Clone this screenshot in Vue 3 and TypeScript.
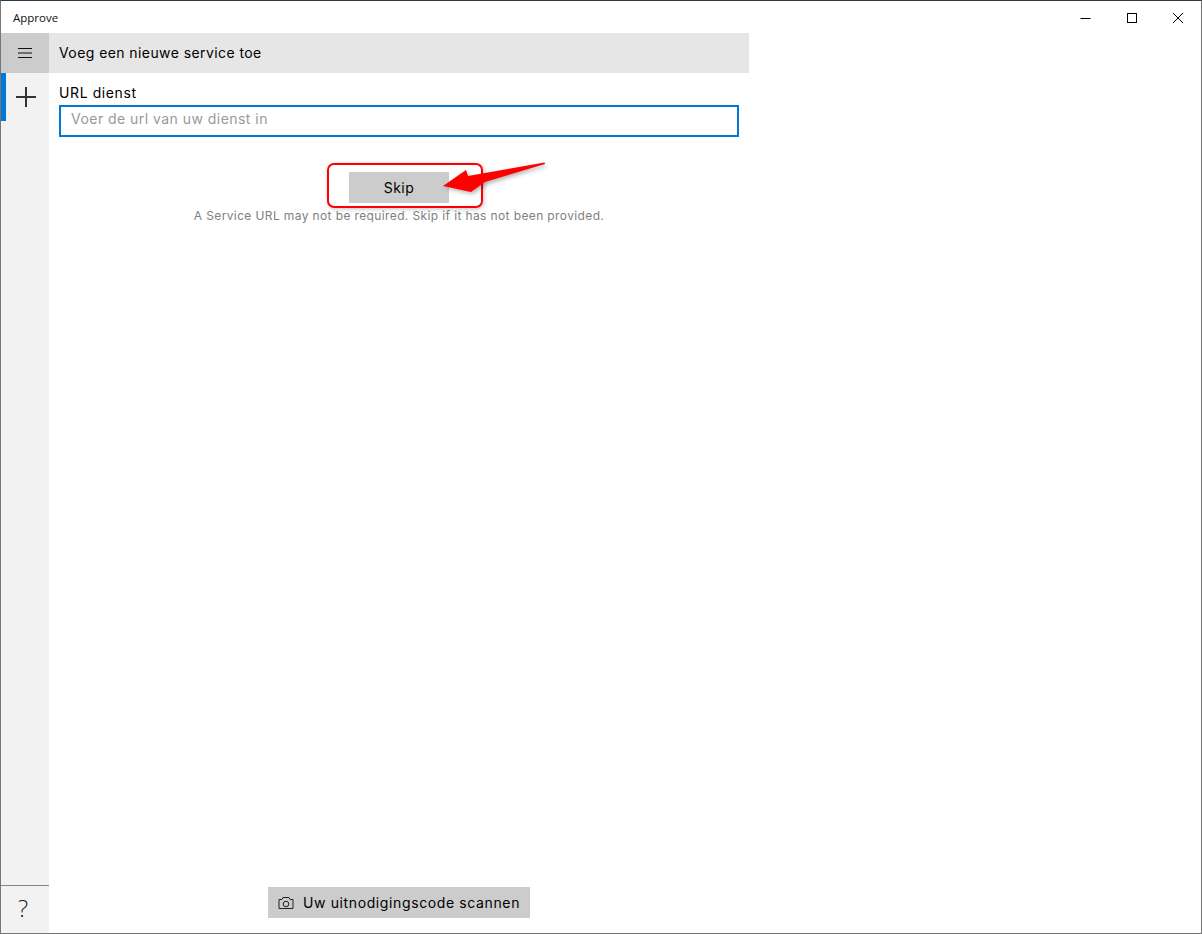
<template>
  <div class="window">
    <header class="titlebar">
      <span class="app-name">Approve</span>
      <div class="window-controls">
        <svg width="46" height="32" viewBox="0 0 46 32"><path d="M17.5 17.5h10" /></svg>
        <svg width="46" height="32" viewBox="0 0 46 32"><rect x="18.5" y="12.5" width="9" height="9" /></svg>
        <svg width="46" height="32" viewBox="0 0 46 32"><path d="M18 12l10 10M28 12L18 22" /></svg>
      </div>
    </header>
    <div class="shell">
      <nav class="rail">
        <button class="rail-toggle" type="button" aria-label="Menu">
          <svg width="14" height="10" viewBox="0 0 14 10"><path d="M0 .5h14M0 5h14M0 9.500h14" /></svg>
        </button>
        <button class="rail-item" type="button" aria-label="Add">
          <svg width="20" height="20" viewBox="0 0 20 20"><path d="M10 0v20M0 10h20" /></svg>
        </button>
        <div class="rail-spacer"></div>
        <button class="rail-help" type="button">?</button>
      </nav>
      <main class="page">
        <div class="content">
          <h1 class="page-title">Voeg een nieuwe service toe</h1>
          <div class="form">
            <label class="field-label" for="url">URL dienst</label>
            <input id="url" class="field-input" type="text" placeholder="Voer de url van uw dienst in" />
            <div class="skip-area">
              <button class="btn skip-btn" type="button">Skip</button>
              <div class="callout"></div>
              <svg class="arrow" width="106" height="34" viewBox="0 0 106 34">
                <path d="M103.500 0.500 L104 2 L44 20 L30 30 L2 24 L25 8 L27 14 Z" />
              </svg>
            </div>
            <p class="hint">A Service URL may not be required. Skip if it has not been provided.</p>
          </div>
          <div class="scan-row">
            <button class="btn scan-btn" type="button">
              <svg width="16" height="14" viewBox="0 0 16 14">
                <path d="M1 3.500h3l1-2h6l1 2h3v9H1z" />
                <circle cx="8" cy="8" r="2.800" />
              </svg>
              Uw uitnodigingscode scannen
            </button>
          </div>
        </div>
      </main>
    </div>
  </div>
</template>

<script setup lang="ts">
</script>

<style>
html,
body {
  margin: 0;
  background: #fff;
}
</style>

<style scoped>
.window {
  width: 1202px;
  height: 934px;
  box-sizing: border-box;
  display: flex;
  flex-direction: column;
  border: 1px solid #767676;
  border-top-color: #2b3a47;
  background: #fff;
  color: #000;
  font-family: Inter, "Liberation Sans", sans-serif;
  overflow: hidden;
}

.titlebar {
  height: 32px;
  flex: none;
  display: flex;
  align-items: center;
  justify-content: space-between;
}

.app-name {
  margin-left: 12px;
  font-family: "Open Sans", sans-serif;
  font-size: 11.500px;
  color: #111;
}

.window-controls {
  display: flex;
}

.window-controls svg {
  fill: none;
  stroke: #000;
  stroke-width: 1;
}

.shell {
  flex: 1;
  display: flex;
  min-height: 0;
}

.rail {
  width: 48px;
  flex: none;
  display: flex;
  flex-direction: column;
  background: #f2f2f2;
}

.rail button {
  border: 0;
  padding: 0;
  background: none;
  display: flex;
  align-items: center;
  justify-content: center;
}

.rail-toggle {
  height: 40px;
  background: #cccccc !important;
}

.rail-toggle svg {
  fill: none;
  stroke: #111;
  stroke-width: 1;
}

.rail-item {
  height: 48px;
  border-left: 5px solid #0078d7 !important;
  padding-right: 3px !important;
  box-sizing: border-box;
}

.rail-item svg {
  fill: none;
  stroke: #333;
  stroke-width: 2;
}

.rail-spacer {
  flex: 1;
}

.rail-help {
  height: 48px;
  padding: 0 4px 4px 0 !important;
  border-top: 1px solid #858585 !important;
  box-sizing: border-box;
  font-family: "Open Sans", sans-serif;
  font-size: 24px;
  font-weight: 300;
  color: #222;
}

.page {
  flex: 1;
  display: flex;
}

.content {
  width: 700px;
  display: flex;
  flex-direction: column;
}

.page-title {
  margin: 0;
  height: 40px;
  box-sizing: border-box;
  padding: 0 0 2px 10px;
  display: flex;
  align-items: center;
  background: #e6e6e6;
  font-size: 14px;
  font-weight: 400;
  letter-spacing: 0.42px;
  color: #000;
}

.form {
  flex: 1;
  padding: 11px 10px 0;
  display: flex;
  flex-direction: column;
  align-items: stretch;
}

.field-label {
  font-size: 14px;
  font-weight: 400;
  letter-spacing: 0.6px;
  line-height: 17px;
  color: #000;
}

.field-input {
  margin-top: 4px;
  height: 32px;
  box-sizing: border-box;
  padding: 0 10px 6px;
  border: 2px solid #0078d7;
  outline: none;
  font: inherit;
  font-size: 14px;
  letter-spacing: 0.46px;
}

.field-input::placeholder {
  color: #999;
  opacity: 1;
}

.skip-area {
  position: relative;
  margin-top: 35px;
  display: flex;
  justify-content: center;
}

.btn {
  border: 0;
  background: #cccccc;
  font-family: inherit;
  font-weight: 400;
  font-size: 14px;
  letter-spacing: 0.5px;
  color: #000;
}

.skip-btn {
  width: 100px;
  height: 31px;
}

.callout {
  position: absolute;
  left: 268px;
  top: -9px;
  width: 156px;
  height: 45px;
  box-sizing: border-box;
  border: 2px solid #f00;
  border-radius: 7px;
  box-shadow: 1px 1px 4px rgba(0, 0, 0, 0.25);
}

.arrow {
  position: absolute;
  left: 382px;
  top: -10px;
  fill: #f00;
  filter: drop-shadow(2px 2px 2px rgba(0, 0, 0, 0.3));
}

.hint {
  margin: 5px 0 0;
  text-align: center;
  font-size: 12px;
  letter-spacing: 0.38px;
  line-height: 16px;
  color: #808080;
}

.scan-row {
  display: flex;
  justify-content: center;
  padding-bottom: 15px;
}

.scan-btn {
  width: 262px;
  height: 31px;
  display: flex;
  align-items: center;
  justify-content: center;
  gap: 9px;
  letter-spacing: 0.62px;
}

.scan-btn svg {
  fill: none;
  stroke: #222;
  stroke-width: 1;
}
</style>
